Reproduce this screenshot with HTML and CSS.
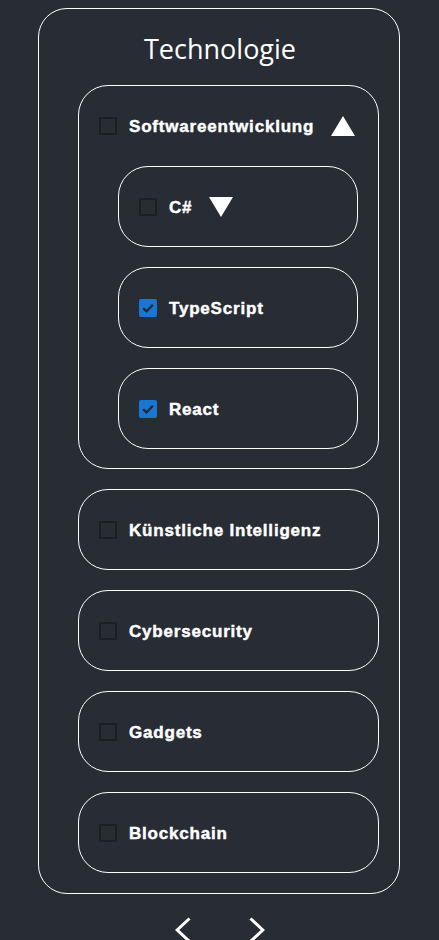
FILE: index.html
```html
<!DOCTYPE html>
<html lang="de">
<head>
<meta charset="utf-8">
<title>Technologie</title>
<link rel="stylesheet" href="styles.css">
</head>
<body>
<div class="page">
  <section class="panel">
    <h1 class="title">Technologie</h1>
    <ul class="list">
      <li class="item">
        <div class="row">
          <span class="box"></span>
          <span class="label">Softwareentwicklung</span>
          <span class="tri up"></span>
        </div>
        <ul class="list sub">
          <li class="item small">
            <div class="row">
              <span class="box"></span>
              <span class="label">C#</span>
              <span class="tri down"></span>
            </div>
          </li>
          <li class="item small">
            <div class="row">
              <span class="box checked"><svg viewBox="0 0 18 18" width="18" height="18"><path d="M4.2 9.2l3.3 3.2 6.3-6.6" fill="none" stroke="#22262d" stroke-width="2.2"/></svg></span>
              <span class="label">TypeScript</span>
            </div>
          </li>
          <li class="item small">
            <div class="row">
              <span class="box checked"><svg viewBox="0 0 18 18" width="18" height="18"><path d="M4.2 9.2l3.3 3.2 6.3-6.6" fill="none" stroke="#22262d" stroke-width="2.2"/></svg></span>
              <span class="label">React</span>
            </div>
          </li>
        </ul>
      </li>
      <li class="item">
        <div class="row"><span class="box"></span><span class="label">Künstliche Intelligenz</span></div>
      </li>
      <li class="item">
        <div class="row"><span class="box"></span><span class="label">Cybersecurity</span></div>
      </li>
      <li class="item">
        <div class="row"><span class="box"></span><span class="label">Gadgets</span></div>
      </li>
      <li class="item">
        <div class="row"><span class="box"></span><span class="label">Blockchain</span></div>
      </li>
    </ul>
  </section>
  <nav class="pager">
    <svg class="chev" viewBox="0 0 16 26" width="16" height="26"><path d="M14.5 1.5L2.2 13l12.3 11.5" fill="none" stroke="#fff" stroke-width="3"/></svg>
    <svg class="chev" viewBox="0 0 16 26" width="16" height="26"><path d="M1.5 1.5L13.8 13L1.5 24.5" fill="none" stroke="#fff" stroke-width="3"/></svg>
  </nav>
</div>
</body>
</html>
```

FILE: styles.css
```css
html, body {
  margin: 0;
  padding: 0;
  background: #282c34;
  height: 100%;
  overflow: hidden;
}
.page {
  padding-top: 8px;
  display: flex;
  flex-direction: column;
  align-items: center;
}
.panel {
  border: 1px solid #ffffff;
  border-radius: 29px;
  box-sizing: border-box;
  width: 362px;
  padding: 0 20px 20px 0;
  margin-right: 1px;
}
.title {
  margin: 0;
  padding: 22px 0 0 22px;
  height: 76px;
  box-sizing: border-box;
  text-align: center;
  font-family: "Open Sans", sans-serif;
  font-weight: 400;
  font-size: 27px;
  line-height: 36px;
  color: #ffffff;
}
.list {
  list-style: none;
  margin: 0;
  padding: 0 0 0 39px;
  display: flex;
  flex-direction: column;
  gap: 20px;
}
.sub {
  padding: 0 20px 19px 39px;
  margin-top: 1px;
}
.item {
  border: 1px solid #ffffff;
  border-radius: 30px;
}
.row {
  height: 79px;
  display: flex;
  align-items: center;
  padding-left: 20px;
}
.box {
  width: 18px;
  height: 18px;
  box-sizing: border-box;
  border: 2px solid #1b1e23;
  border-radius: 2px;
  flex: none;
  display: flex;
}
.box.checked {
  background: #1976d2;
  border: none;
}
.label {
  margin-left: 12px;
  padding-top: 3px;
  font-family: "Liberation Sans", Arial, sans-serif;
  font-weight: 700;
  font-size: 17px;
  letter-spacing: 0.8px;
  color: #ffffff;
  -webkit-text-stroke: 0.45px #ffffff;
}
.tri {
  width: 0;
  height: 0;
  margin-left: 17px;
  border-left: 12px solid transparent;
  border-right: 12px solid transparent;
}
.tri.up {
  border-bottom: 20px solid #ffffff;
}
.tri.down {
  border-top: 20px solid #ffffff;
}
.pager {
  display: flex;
  gap: 58px;
  margin-top: 23px;
}
.chev {
  display: block;
}
```
